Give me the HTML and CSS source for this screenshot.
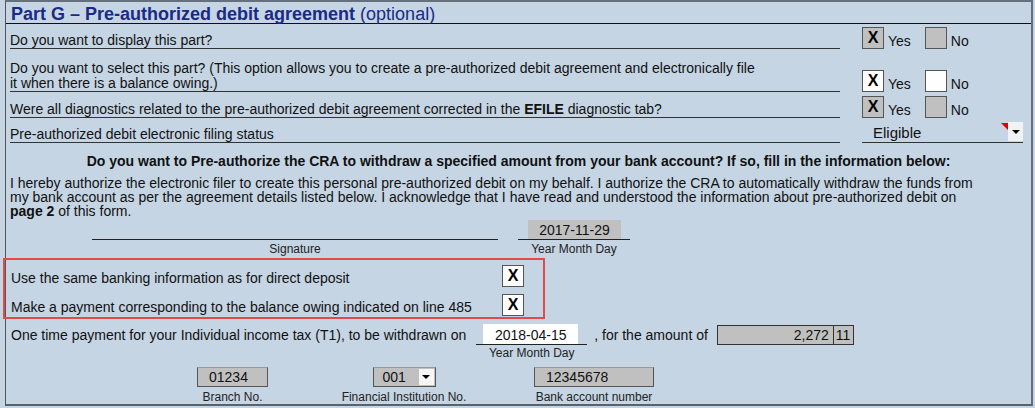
FILE: index.html
```html
<!DOCTYPE html>
<html lang="en">
<head>
    <meta charset="UTF-8">
    <title>Part G - Pre-authorized debit agreement</title>
    <link rel="stylesheet" href="styles.css">
</head>
<body>

<div class="form">
    <div class="part-title"><strong>Part G – Pre-authorized debit agreement</strong> (optional)</div>

    <div class="question">
        <div class="question-text q1"><span>Do you want to display this part?</span></div>
        <div class="answer">
            <span class="choice"><span class="check">X</span>Yes</span>
            <span class="choice"><span class="check"></span>No</span>
        </div>
    </div>

    <div class="question">
        <div class="question-text q2"><span>Do you want to select this part? (This option allows you to create a pre-authorized debit agreement and electronically file<br>it when there is a balance owing.)</span></div>
        <div class="answer">
            <span class="choice"><span class="check white">X</span>Yes</span>
            <span class="choice"><span class="check white"></span>No</span>
        </div>
    </div>

    <div class="question">
        <div class="question-text q3"><span>Were all diagnostics related to the pre-authorized debit agreement corrected in the <b>EFILE</b> diagnostic tab?</span></div>
        <div class="answer">
            <span class="choice"><span class="check">X</span>Yes</span>
            <span class="choice"><span class="check"></span>No</span>
        </div>
    </div>

    <div class="question">
        <div class="question-text q4"><span>Pre-authorized debit electronic filing status</span></div>
        <div class="answer">
            <div class="select-field">
                <span class="select-value">Eligible</span>
                <span class="select-btn"><span class="arrow"></span></span>
            </div>
        </div>
    </div>

    <div class="prompt">Do you want to Pre-authorize the CRA to withdraw a specified amount from your bank account? If so, fill in the information below:</div>

    <p class="paragraph">
        I hereby authorize the electronic filer to create this personal pre-authorized debit on my behalf. I authorize the CRA to automatically withdraw the funds from<br>
        my bank account as per the agreement details listed below. I acknowledge that I have read and understood the information about pre-authorized debit on<br>
        <b>page 2</b> of this form.
    </p>

    <div class="signature-row">
        <div class="sig-group">
            <div class="sig-line"></div>
            <div class="small-label">Signature</div>
        </div>
        <div class="date-group">
            <div class="date-line"><div class="date-value">2017-11-29</div></div>
            <div class="small-label">Year Month Day</div>
        </div>
    </div>

    <div class="auth-options">
        <div class="option-row">
            <div class="option-label">Use the same banking information as for direct deposit</div>
            <span class="check white">X</span>
        </div>
        <div class="option-row">
            <div class="option-label">Make a payment corresponding to the balance owing indicated on line 485</div>
            <span class="check white">X</span>
        </div>
    </div>

    <div class="payment-row">
        <span>One time payment for your Individual income tax (T1), to be withdrawn on</span>
        <div class="date-input">
            <div class="date-line"><div class="date-input-value">2018-04-15</div></div>
            <div class="small-label tight">Year Month Day</div>
        </div>
        <span class="amount-text">, for the amount of</span>
        <div class="amount">
            <span class="amount-dollars">2,272</span>
            <span class="amount-cents">11</span>
        </div>
    </div>

    <div class="bank-row">
        <div class="bank-group branch">
            <div class="field-box">01234</div>
            <div class="small-label bottom">Branch No.</div>
        </div>
        <div class="bank-group institution">
            <div class="field-box select">
                <span>001</span>
                <span class="select-btn small"><span class="arrow"></span></span>
            </div>
            <div class="small-label bottom">Financial Institution No.</div>
        </div>
        <div class="bank-group account">
            <div class="field-box">12345678</div>
            <div class="small-label bottom">Bank account number</div>
        </div>
    </div>
</div>

</body>
</html>
```

FILE: styles.css
```css
body {
    margin: 0;
    background-color: #c5d5e4;
    font-family: "Liberation Sans", Arial, sans-serif;
    font-size: 14px;
    color: #111;
}

.form {
    margin-left: 5px;
    width: 1025px;
    border-left: 1px solid #555;
    border-right: 2px solid #66707c;
    border-top: 2px solid #66707c;
    border-bottom: 2px solid #5a616b;
}

.part-title {
    height: 19px;
    padding: 2px 0 0 5px;
    line-height: 20px;
    font-size: 18px;
    color: #1a2a86;
    border-bottom: 1px solid #111;
}

/* question rows */
.question {
    display: flex;
    align-items: flex-end;
}

.question-text {
    box-sizing: border-box;
    width: 830px;
    margin-left: 4px;
    display: flex;
    align-items: flex-end;
    line-height: 15px;
    border-bottom: 1px solid #333;
}

.q1 { height: 25px; }
.q2 { height: 43px; }
.q3 { height: 26px; }
.q4 { height: 25px; }

.answer {
    display: flex;
    gap: 14px;
    margin-left: 22px;
}

.choice {
    display: flex;
    align-items: flex-end;
    line-height: 16px;
}

.check {
    width: 20px;
    height: 20px;
    margin-right: 4px;
    border: 1px solid #555;
    background: #c0c0c0;
    font-weight: bold;
    font-size: 16px;
    line-height: 20px;
    text-align: center;
    color: #000;
}

.check.white {
    background: #fff;
}

.select-field {
    position: relative;
    display: flex;
    width: 161px;
    height: 20px;
    border-bottom: 1px solid #333;
}

.select-field::before {
    content: "";
    position: absolute;
    top: 1px;
    right: 15px;
    border-top: 7px solid #e00000;
    border-left: 7px solid transparent;
}

.select-value {
    height: 20px;
    padding-left: 11px;
    font-size: 15px;
    line-height: 22px;
}

.select-btn {
    width: 15px;
    height: 19px;
    margin-left: auto;
    background: #f2f2f2;
    display: flex;
    align-items: center;
    justify-content: center;
}

.arrow {
    width: 0;
    height: 0;
    border-left: 4px solid transparent;
    border-right: 4px solid transparent;
    border-top: 4px solid #000;
}

/* agreement text */
.prompt {
    margin-top: 10px;
    font-weight: bold;
    line-height: 16px;
    text-align: center;
}

.paragraph {
    margin: 7px 0 0 4px;
    line-height: 14px;
    white-space: nowrap;
}

.signature-row {
    display: flex;
    margin-top: 2px;
    padding-left: 86px;
}

.sig-group {
    width: 406px;
}

.sig-line {
    height: 19px;
    border-bottom: 1px solid #222;
}

.small-label {
    padding-top: 2px;
    font-size: 12px;
    line-height: 14px;
    text-align: center;
    white-space: nowrap;
    color: #222;
}

.small-label.tight {
    padding-top: 1px;
}

.small-label.bottom {
    padding-top: 4px;
    line-height: 13px;
}

.date-group {
    width: 112px;
    margin-left: 20px;
}

.date-line {
    border-bottom: 1px solid #222;
}

.date-value {
    height: 19px;
    margin: 0 9px 0 10px;
    background: #c0c0c0;
    line-height: 20px;
    text-align: center;
}

/* highlighted options */
.auth-options {
    position: relative;
    margin-top: 2px;
    padding-bottom: 3px;
}

.auth-options::after {
    content: "";
    position: absolute;
    top: 0;
    left: -3px;
    width: 542px;
    height: 100%;
    box-sizing: border-box;
    border: 2px solid #e24b4b;
}

.option-row {
    display: flex;
    align-items: flex-end;
    height: 29px;
    padding-left: 5px;
}

.option-label {
    width: 491px;
    margin-bottom: 1px;
    line-height: 15px;
}

/* payment */
.payment-row {
    display: flex;
    align-items: baseline;
    margin-top: 5px;
    padding-left: 5px;
}

.date-input {
    width: 111px;
    margin-left: 10px;
}

.date-input-value {
    height: 20px;
    margin: 0 9px 0 7px;
    background: #fff;
    line-height: 22px;
    text-align: center;
    overflow: hidden;
}

.amount-text {
    margin-left: 7px;
}

.amount {
    display: flex;
    box-sizing: border-box;
    height: 20px;
    margin-left: 9px;
    border: 1px solid #333;
    background: #c0c0c0;
    line-height: 18px;
}

.amount-dollars {
    box-sizing: border-box;
    width: 116px;
    padding-right: 4px;
    border-right: 1px solid #333;
    text-align: right;
}

.amount-cents {
    width: 17px;
    padding-left: 2px;
}

/* bank info */
.bank-row {
    display: flex;
    margin-top: 7px;
    padding-left: 191px;
}

.bank-group {
    display: flex;
    flex-direction: column;
    align-items: center;
}

.branch { width: 71px; }
.institution { width: 126px; margin-left: 73px; }
.account { width: 122px; margin-left: 66px; }

.field-box {
    box-sizing: border-box;
    height: 20px;
    padding-left: 11px;
    border: 1px solid #555;
    border-top-color: #999;
    background: #c0c0c0;
    line-height: 18px;
}

.branch .field-box { width: 71px; }
.account .field-box { width: 120px; }

.field-box.select {
    display: flex;
    width: 63px;
    padding-left: 9px;
}

.select-btn.small {
    height: 16px;
    margin: 1px 1px 0 auto;
    background: #f6f6f6;
}
```
